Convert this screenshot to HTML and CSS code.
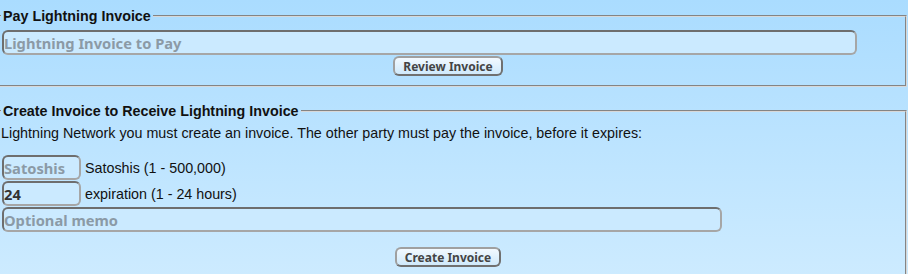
FILE: index.html
```html
<!DOCTYPE html>
<html lang="en">
<head>
    <meta charset="UTF-8">
    <title>Lightning Invoices</title>
    <link rel="stylesheet" href="styles.css">
</head>
<body>

    <!-- Pay an invoice -->
    <fieldset class="box">
        <legend>Pay Lightning Invoice</legend>
        <input class="field field-wide" type="text" placeholder="Lightning Invoice to Pay">
        <div class="actions">
            <button class="btn">Review Invoice</button>
        </div>
    </fieldset>

    <!-- Create an invoice -->
    <fieldset class="box box-create">
        <legend>Create Invoice to Receive Lightning Invoice</legend>
        <p class="intro">Lightning Network you must create an invoice. The other party must pay the invoice, before it expires:</p>
        <div class="row">
            <input class="field field-small" type="text" placeholder="Satoshis">
            <span>Satoshis (1 - 500,000)</span>
        </div>
        <div class="row">
            <input class="field field-small" type="text" value="24">
            <span>expiration (1 - 24 hours)</span>
        </div>
        <div class="row">
            <input class="field field-memo" type="text" placeholder="Optional memo">
        </div>
        <div class="actions actions-create">
            <button class="btn">Create Invoice</button>
        </div>
    </fieldset>

</body>
</html>
```

FILE: styles.css
```css
/* Page */
body {
    margin: 0;
    padding-top: 8px;
    font-family: "Liberation Sans", Arial, sans-serif;
    font-size: 14.3px;
    color: #111;
    background: linear-gradient(to bottom, #aadcff, #cdebff);
    min-height: 266px;
    overflow: hidden;
}

/* Fieldsets */
.box {
    margin: 0 1px 0 -11px;
    padding: 6px 10px 9px 10px;
    border: 2px groove #d8d8d8;
    min-width: 0;
}

.box legend {
    padding: 0 2px;
    margin-left: 0;
    font-weight: bold;
    line-height: 16px;
}

.box-create {
    margin-top: 16px;
    padding-top: 6px;
}

.intro {
    margin: 0 0 14px 0;
    line-height: 16px;
}

/* Inputs */
.field {
    display: block;
    box-sizing: border-box;
    height: 25px;
    margin: 0 0 0 1px;
    padding: 0;
    font-family: "Noto Sans", sans-serif;
    font-weight: bold;
    font-size: 14.7px;
    color: #333;
    background: #cbeaff;
    border: 2px solid;
    border-color: #6e6e6e #a6a6a6 #a6a6a6 #6e6e6e;
    border-radius: 6px;
    outline: none;
}

.field::placeholder {
    color: #8b9aa6;
}

.field-wide {
    width: 855px;
}

.field-small {
    width: 79px;
}

.field-memo {
    width: 720px;
}

.row {
    display: flex;
    align-items: center;
    gap: 4px;
    margin-bottom: 1px;
}

/* Buttons */
.actions {
    text-align: center;
    margin-top: 1px;
}

.actions-create {
    margin-top: 15px;
}

.btn {
    box-sizing: border-box;
    height: 20px;
    padding: 0 8px;
    font-family: "Noto Sans", sans-serif;
    font-weight: bold;
    font-size: 12px;
    color: #444;
    background: linear-gradient(to bottom, #f2f9ff, #cfe9fb);
    border: 2px solid;
    border-color: #a0a0a0 #707070 #707070 #a0a0a0;
    border-radius: 6px;
}
```
